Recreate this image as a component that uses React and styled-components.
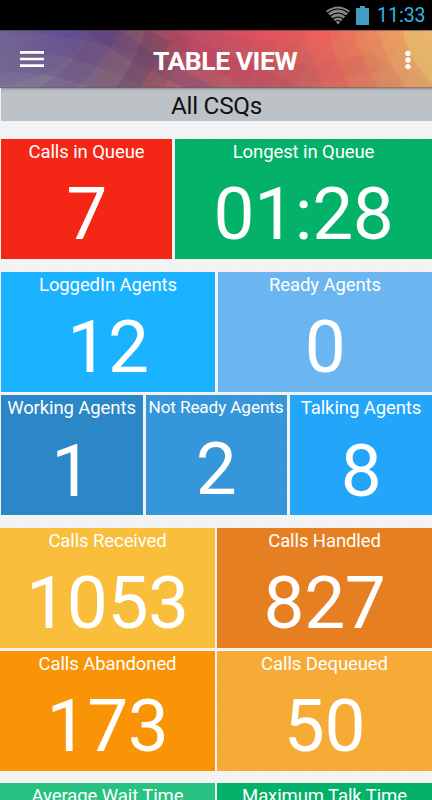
import React from "react";
import styled, { createGlobalStyle } from "styled-components";

const GlobalStyle = createGlobalStyle`
  * { box-sizing: border-box; }
  html, body { margin: 0; padding: 0; }
  body {
    height: 800px;
    overflow: hidden;
    font-family: Roboto, "Noto Sans", sans-serif;
    background-color: #f5f5f5;
    background-image:
      repeating-linear-gradient(0deg, rgba(0,0,0,0.012) 0 1px, transparent 1px 3px),
      repeating-linear-gradient(90deg, rgba(0,0,0,0.012) 0 1px, transparent 1px 3px);
  }
`;

const Screen = styled.main`
  width: 432px;
  height: 800px;
  overflow: hidden;
  display: flex;
  flex-direction: column;
`;

const StatusBar = styled.div`
  flex: none;
  height: 30px;
  display: flex;
  justify-content: flex-end;
  align-items: center;
  padding-right: 7px;
  background: #000;
`;

const StatusIcon = styled.svg`
  flex: none;
  display: block;
  margin-right: ${(p) => p.$gap}px;
`;

const Clock = styled.span`
  width: 48px;
  padding-top: 2px;
  color: #33b5e5;
  font-size: 19.5px;
  line-height: 30px;
  white-space: nowrap;
  text-align: right;
`;

const AppBar = styled.header`
  flex: none;
  position: relative;
  height: 58px;
  display: grid;
  grid-template-columns: 52px 1fr 48px;
  align-items: center;
  overflow: hidden;
`;

const Backdrop = styled.svg`
  position: absolute;
  inset: 0;
`;

const IconButton = styled.button`
  position: relative;
  width: 100%;
  height: 58px;
  padding: 0;
  border: 0;
  background: none;
  display: flex;
`;

const Title = styled.h1`
  position: relative;
  margin: 0;
  padding: 3px 0 0 14px;
  display: flex;
  justify-content: center;
  color: #fff;
  font-size: 26.5px;
  font-weight: 700;
  line-height: 32px;
  letter-spacing: -0.45px;
  white-space: nowrap;
`;

const GroupHeading = styled.h2`
  flex: none;
  margin: 0 0 0 1px;
  height: 32.5px;
  padding-top: 3px;
  background: linear-gradient(#8f9399, #b4b9be 2px, #bdc2c7 5px);
  color: #111;
  font-size: 24.3px;
  font-weight: 400;
  line-height: 30px;
  letter-spacing: -0.25px;
  text-align: center;
`;

const Board = styled.div`
  flex: 1;
  padding-top: 18.5px;
  display: flex;
  flex-direction: column;
`;

const TileRow = styled.div`
  flex: none;
  height: 120px;
  display: grid;
  grid-template-columns: ${(p) => p.$columns};
  column-gap: ${(p) => p.$gap}px;
  padding-left: ${(p) => p.$inset}px;
  margin-bottom: ${(p) => p.$after}px;
`;

const Tile = styled.section`
  min-width: 0;
  overflow: hidden;
  display: flex;
  flex-direction: column;
  align-items: center;
  background: ${(p) => p.$color};
  color: #fff;
`;

const TileLabel = styled.div`
  height: 26px;
  font-size: ${(p) => (p.$compact ? 17.2 : 18.5)}px;
  line-height: ${(p) => (p.$compact ? 25 : 26)}px;
  letter-spacing: ${(p) => (p.$compact ? -0.13 : -0.1)}px;
  white-space: nowrap;
`;

const TileValue = styled.div`
  font-size: 73px;
  line-height: 86px;
  margin-top: ${(p) => 6 + (p.$drop || 0)}px;
  letter-spacing: -0.4px;
  white-space: nowrap;
`;

const rows = [
  {
    columns: "171px 257px", gap: 3, inset: 1, after: 13,
    tiles: [
      { label: "Calls in Queue", value: "7", color: "#f42616" },
      { label: "Longest in Queue", value: "01:28", color: "#04b169" },
    ],
  },
  {
    columns: "214px 214px", gap: 3, inset: 1, after: 3,
    tiles: [
      { label: "LoggedIn Agents", value: "12", color: "#1bb3ff" },
      { label: "Ready Agents", value: "0", color: "#6bb6f0" },
    ],
  },
  {
    columns: "142px 141px 143px", gap: 3, inset: 0.5, after: 12.5,
    tiles: [
      { label: "Working Agents", value: "1", color: "#2c87c6", drop: 1 },
      { label: "Not Ready Agents", value: "2", color: "#3597da", compact: true, drop: -1 },
      { label: "Talking Agents", value: "8", color: "#23a5fa", drop: 1 },
    ],
  },
  {
    columns: "215px 215px", gap: 2, inset: 0, after: 3,
    tiles: [
      { label: "Calls Received", value: "1053", color: "#f9be3b" },
      { label: "Calls Handled", value: "827", color: "#e67e22" },
    ],
  },
  {
    columns: "215px 215px", gap: 2, inset: 0, after: 12.5,
    tiles: [
      { label: "Calls Abandoned", value: "173", color: "#f99406" },
      { label: "Calls Dequeued", value: "50", color: "#f5ab35" },
    ],
  },
  {
    columns: "215px 215px", gap: 2, inset: 0, after: 0,
    tiles: [
      { label: "Average Wait Time", value: "", color: "#27c281" },
      { label: "Maximum Talk Time", value: "", color: "#04b169" },
    ],
  },
];

const bands = [224, 248, 273, 299, 325, 351, 378, 404];

function HeaderArt() {
  return (
    <Backdrop width="432" height="58" viewBox="0 0 432 58" aria-hidden="true">
      <defs>
        <linearGradient id="spectrum">
          <stop offset="0" stopColor="#69619a" />
          <stop offset="0.17" stopColor="#654b8c" />
          <stop offset="0.28" stopColor="#714f79" />
          <stop offset="0.36" stopColor="#965069" />
          <stop offset="0.46" stopColor="#c14d64" />
          <stop offset="0.62" stopColor="#d95159" />
          <stop offset="0.79" stopColor="#e36a57" />
          <stop offset="0.9" stopColor="#e68b5c" />
          <stop offset="1" stopColor="#e8b165" />
        </linearGradient>
        <linearGradient id="dusk" x2="0" y2="1">
          <stop offset="0.1" stopColor="#74747c" stopOpacity="0" />
          <stop offset="1" stopColor="#85747a" stopOpacity="0.5" />
        </linearGradient>
      </defs>
      <path d="M0 0H432V58H0Z" fill="url(#spectrum)" />
      <path d="M0 0H432V58H0Z" fill="url(#dusk)" opacity="0.6" />
      <path d="M0 3Q75 2 150 28Q190 43 218 58H0Z" fill="#8c7183" opacity="0.22" />
      <path d="M0 23Q70 16 145 58H0Z" fill="#8b7e8d" opacity="0.25" />
      <path d="M0 43Q45 40 91 58H0Z" fill="#9288a6" opacity="0.32" />
      <path d="M0 24Q38 20 55 0H92Q64 48 0 56Z" fill="#5555a1" opacity="0.22" />
      <path d="M92 0Q70 43 38 58H76Q102 35 120 0Z" fill="#573d83" opacity="0.16" />
      <path d="M120 0Q104 35 90 58H118Q138 25 146 0Z" fill="#8b5d65" opacity="0.25" />
      <path d="M146 0Q134 32 116 58H140Q158 30 173 12Z" fill="#633e59" opacity="0.34" />
      <path d="M173 4Q155 28 140 58H164Q178 28 192 13Z" fill="#9c4957" opacity="0.38" />
      <path d="M192 12Q175 35 165 58H190Q203 38 217 23Z" fill="#d25162" opacity="0.25" />
      <path d="M84 0Q133 36 185 58H218Q157 30 121 0Z" fill="#4d326f" opacity="0.16" />
      <path d="M145 0Q194 25 245 58H303Q220 22 176 0Z" fill="#b63158" opacity="0.18" />
      <path d="M216 0Q265 18 345 8L340 0Z" fill="#ef5262" opacity="0.38" />
      <path d="M190 19Q282 48 375 22L384 40Q300 62 211 43Z" fill="#c54255" opacity="0.17" />
      <path d="M304 0Q310 28 324 58H350Q336 28 329 0Z" fill="#fa6259" opacity="0.34" />
      <path d="M329 0Q334 30 350 58H379Q360 28 353 0Z" fill="#f47b5b" opacity="0.35" />
      <path d="M353 0Q360 28 379 58H407Q384 29 378 0Z" fill="#f1945c" opacity="0.35" />
      <path d="M378 0Q384 29 407 58H432V53Q407 29 403 0Z" fill="#f6a964" opacity="0.42" />
      <path d="M403 0Q407 29 432 53V0Z" fill="#eabb6c" opacity="0.7" />
      {bands.map((x) => (
        <path key={x} d={`M${x} 58Q${x + 17} 25 ${x + 54} 0`} fill="none" stroke="#fff" strokeOpacity="0.02" strokeWidth="8" />
      ))}
      <path d="M0 .5H432" stroke="#4d354d" strokeOpacity="0.5" />
      <path d="M0 57.5H432" stroke="#645962" strokeOpacity="0.5" />
    </Backdrop>
  );
}

export default function App() {
  return (
    <>
      <GlobalStyle />
      <Screen>
        <StatusBar>
          <StatusIcon width="24" height="19" viewBox="0 0 24 19" $gap={6}>
            <path d="M0 5Q12-4 24 5L12 18.5Z" fill="#858585" />
            <path d="M1.5 7Q12-1 22.5 7M4.2 10Q12 4 19.8 10M6.8 13Q12 9 17.2 13M9.2 15.6Q12 13.5 14.8 15.6" stroke="#000" strokeWidth="1.1" fill="none" />
          </StatusIcon>
          <StatusIcon width="13" height="19" viewBox="0 0 13 19" $gap={8}>
            <path d="M4 0H9V2H13V19H0V2H4Z" fill="#419dc3" />
          </StatusIcon>
          <Clock>11:33</Clock>
        </StatusBar>
        <AppBar>
          <HeaderArt />
          <IconButton aria-label="Menu">
            <svg width="52" height="58" viewBox="0 0 52 58">
              <path d="M20 22.3H44M20 29H44M20 35.7H44" stroke="#fff" strokeWidth="2.7" />
            </svg>
          </IconButton>
          <Title>TABLE VIEW</Title>
          <IconButton aria-label="More options">
            <svg width="48" height="58" viewBox="0 0 48 58">
              <g fill="#fff">
                <circle cx="24" cy="23.4" r="2.7" />
                <circle cx="24" cy="30" r="2.7" />
                <circle cx="24" cy="36.6" r="2.7" />
              </g>
            </svg>
          </IconButton>
        </AppBar>
        <GroupHeading>All CSQs</GroupHeading>
        <Board>
          {rows.map((row) => (
            <TileRow key={row.tiles[0].label} $columns={row.columns} $gap={row.gap} $inset={row.inset} $after={row.after}>
              {row.tiles.map((tile) => (
                <Tile key={tile.label} $color={tile.color}>
                  <TileLabel $compact={tile.compact}>{tile.label}</TileLabel>
                  <TileValue $drop={tile.drop}>{tile.value}</TileValue>
                </Tile>
              ))}
            </TileRow>
          ))}
        </Board>
      </Screen>
    </>
  );
}
